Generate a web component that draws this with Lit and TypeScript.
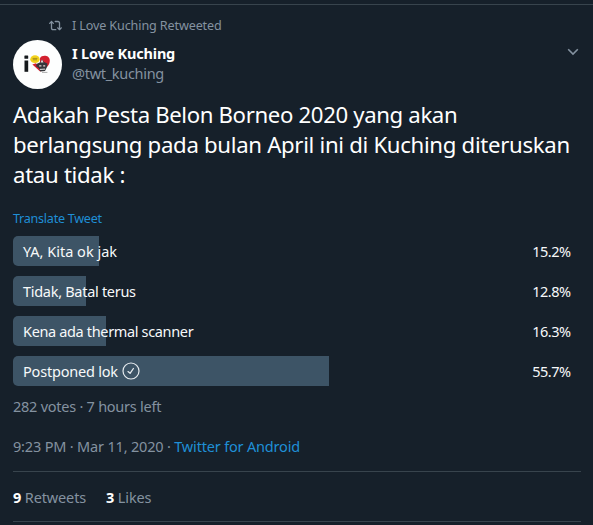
import { LitElement, html, css, nothing } from "lit";
import { customElement, property } from "lit/decorators.js";

const avatar = html`<svg viewBox="0 0 49 49" width="49" height="49">
  <circle cx="24.5" cy="24.5" r="24.5" fill="#fdfefe" />
  <rect x="11.4" y="15.4" width="3.8" height="3.4" rx="0.6" fill="#15191c" />
  <rect x="11.5" y="20.5" width="3.7" height="11.3" fill="#15191c" />
  <path d="M27 18.2c1.8-3.6 9.6-3.2 9.8 2.2.1 2.6-1 4.5-2.8 6.6l-7-2.8z" fill="#d3202f" />
  <path d="M19.4 24.5l8 7.3 1-3.4-5.5-5.2z" fill="#d3202f" />
  <ellipse cx="22" cy="19.2" rx="4.7" ry="3.9" fill="#f3d31c" />
  <path d="M19.6 18.4h4.8M19.8 19.8h4.2" stroke="#a08a18" stroke-width=".9" />
  <path d="M23.5 24l3.7-1.7 1.8-2.8 2 2.6 3.4 1.3-.4 3.6-2 4-4.6.5-1.7-3.4-2.5-1.5z" fill="#35363b" />
  <path d="M27.6 22.4l1.4-2.8 1.5 2.8zM26.2 25.2h2.2v1.4h-2.2zM30.2 25.2h2v1.4h-2z" fill="#ecd5d5" />
  <path d="M26.8 29.4l5.3-.3" stroke="#e6e6e6" stroke-width="1" />
  <path d="M29 32.4h5.4" stroke="#777" stroke-width=".6" />
</svg>`;

const retweet = html`<svg viewBox="0 0 24 24" width="13" height="13" fill="#8492a0">
  <path d="M23.615 15.477c-.47-.47-1.23-.47-1.697 0l-1.326 1.326V7.4c0-2.178-1.772-3.95-3.95-3.95h-5.2c-.663 0-1.2.538-1.2 1.2s.537 1.2 1.2 1.2h5.2c.854 0 1.55.695 1.55 1.55v9.403l-1.326-1.326c-.47-.47-1.23-.47-1.697 0s-.47 1.23 0 1.697l3.374 3.375c.234.233.542.35.85.35s.613-.116.848-.35l3.375-3.376c.467-.47.467-1.23-.002-1.697zM12.562 18.5h-5.2c-.854 0-1.55-.695-1.55-1.55V7.547l1.326 1.326c.234.235.542.352.848.352s.614-.117.85-.352c.468-.47.468-1.23 0-1.697L5.46 3.8c-.47-.468-1.23-.468-1.697 0L.388 7.177c-.47.47-.47 1.23 0 1.697s1.23.47 1.697 0L3.41 7.547v9.403c0 2.178 1.773 3.95 3.95 3.95h5.2c.664 0 1.2-.538 1.2-1.2s-.535-1.2-1.198-1.2z" />
</svg>`;

const chevron = html`<svg viewBox="0 0 12 8" width="12" height="8" fill="none">
  <path d="M1.2 1.3L6 6.1l4.8-4.8" stroke="#8492a0" stroke-width="1.6" />
</svg>`;

const check = html`<svg viewBox="0 0 18 18" width="18" height="18" fill="none" stroke="#e6ebef">
  <circle cx="9" cy="9" r="8" stroke-width="1.2" />
  <path d="M6 9.6l2.1 1.7 3.3-4.8" stroke-width="1.3" stroke-linecap="round" stroke-linejoin="round" />
</svg>`;

@customElement("poll-option")
class PollOption extends LitElement {
  @property() label = "";
  @property({ type: Number }) share = 0;
  @property({ type: Boolean }) chosen = false;
  @property({ type: Number }) spacing = 0;

  static styles = css`
    :host { display: grid; height: 30px; align-items: center; color: #f7f9fa; font-size: 14.5px; line-height: 20px; }
    .bar, .row { grid-area: 1 / 1; }
    .bar { height: 30px; background: #3d5466; border-radius: 5px 0 0 5px; }
    .row { display: flex; justify-content: space-between; padding: 0 10.5px 0 10px; }
    .label { display: flex; align-items: center; gap: 3.8px; white-space: nowrap; }
    .share { letter-spacing: -0.5px; }
    svg { display: block; }
  `;

  render() {
    return html`<div class="bar" style="width:${this.share}%"></div>
      <div class="row">
        <span class="label"><span style="letter-spacing:${this.spacing}px">${this.label}</span>${this.chosen ? check : nothing}</span>
        <span class="share">${this.share}%</span>
      </div>`;
  }
}

@customElement("app-root")
class AppRoot extends LitElement {
  static styles = css`
    :host {
      display: block; box-sizing: border-box; width: 593px; height: 525px; overflow: hidden;
      padding-top: 4px; background: #16202a; color: #fff;
      font: 14.5px/20px "Noto Sans", "Open Sans", sans-serif; white-space: nowrap;
    }
    svg { display: block; }
    .tweet { border-top: 1px solid #38444d; padding: 10px 12px 0 13px; }
    .muted { color: #8492a0; }
    .context { display: grid; grid-template-columns: 49px auto; column-gap: 10px; align-items: center; font-size: 12.6px; height: 20px; letter-spacing: -0.13px; }
    .context span { padding-top: 2px; line-height: 18px; }
    .context svg { justify-self: end; }
    .author { display: grid; grid-template-columns: 49px 1fr auto; column-gap: 10px; margin-top: 5px; height: 49px; }
    .names { padding-top: 3px; }
    .chev { padding-top: 8px; margin-right: 2px; }
    .name { font-weight: 700; letter-spacing: -0.2px; }
    .handle { letter-spacing: -0.3px; }
    b { font-weight: 700; color: #fff; }
    .text { margin-top: 11px; font-size: 22.2px; line-height: 30px; letter-spacing: -0.36px; }
    .l2 { letter-spacing: -0.31px; }
    .l3 { letter-spacing: -0.3px; }
    .link { color: #1f8fd6; }
    .translate { margin-top: 19px; font-size: 12.6px; letter-spacing: -0.27px; }
    .poll { display: grid; gap: 10px; margin-top: 7px; }
    .votes { margin-top: 10px; letter-spacing: -0.25px; }
    .meta { margin-top: 20px; letter-spacing: -0.18px; }
    .stats { display: flex; gap: 20px; margin-top: 15px; padding: 15px 0 14px; border: solid #38444d; border-width: 1px 0; letter-spacing: -0.14px; }
  `;

  render() {
    return html`<article class="tweet">
      <div class="context muted">${retweet}<span>I Love Kuching Retweeted</span></div>
      <header class="author">
        ${avatar}
        <div class="names">
          <div class="name">I Love Kuching</div>
          <div class="handle muted">@twt_kuching</div>
        </div>
        <div class="chev">${chevron}</div>
      </header>
      <div class="text">
        <div>Adakah Pesta Belon Borneo 2020 yang akan</div>
        <div class="l2">berlangsung pada bulan April ini di Kuching diteruskan</div>
        <div class="l3">atau tidak :</div>
      </div>
      <div class="translate link">Translate Tweet</div>
      <div class="poll">
        <poll-option label="YA, Kita ok jak" share="15.2" spacing="0"></poll-option>
        <poll-option label="Tidak, Batal terus" share="12.8" spacing="-0.29"></poll-option>
        <poll-option label="Kena ada thermal scanner" share="16.3" spacing="-0.35"></poll-option>
        <poll-option label="Postponed lok" share="55.7" spacing="-0.2" chosen></poll-option>
      </div>
      <div class="votes muted">282 votes · 7 hours left</div>
      <div class="meta muted">9:23 PM · Mar 11, 2020 · <span class="link">Twitter for Android</span></div>
      <div class="stats muted"><span><b>9</b> Retweets</span><span><b>3</b> Likes</span></div>
    </article>`;
  }
}
